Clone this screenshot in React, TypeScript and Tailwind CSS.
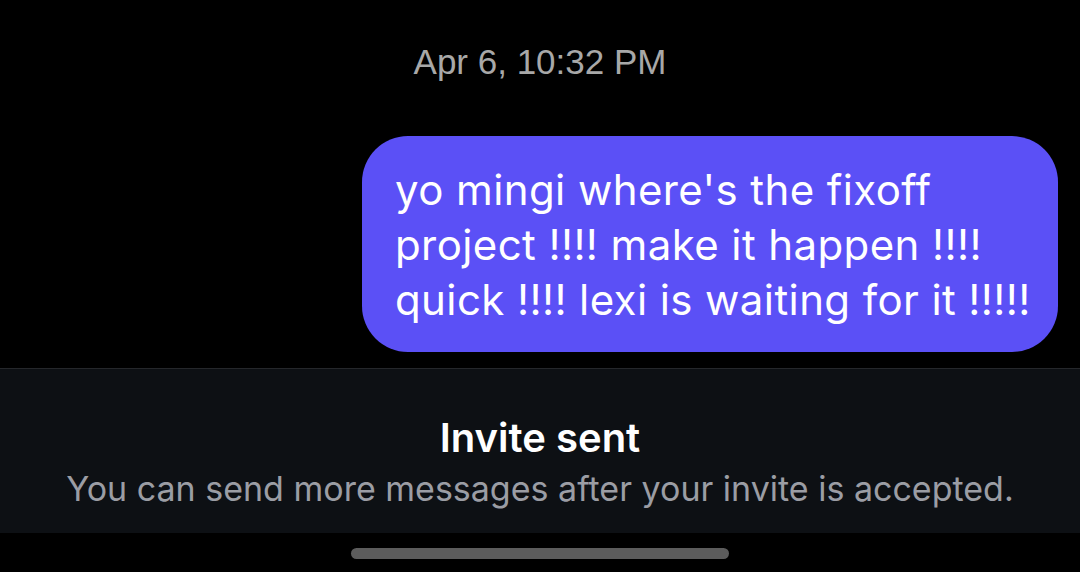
export default function App() {
  return (
    <div className="w-[1080px] h-[572px] bg-black flex flex-col overflow-hidden">
      <div className="flex flex-col flex-1">
        <div
          className="pt-[40px] text-center text-[35px] leading-[44px] text-[#a8a8a8]"
          style={{ fontFamily: '"Liberation Sans", Arial, sans-serif' }}
        >
          Apr 6, 10:32 PM
        </div>
        <div className="flex justify-end pr-[22px] pt-[52px]">
          <div
            className="w-[696px] h-[216px] bg-[#5b50f6] rounded-[46px] pl-[33px] pt-[26px] text-white text-[42px] leading-[55px] tracking-[0.4px]"
            style={{ fontFamily: 'Inter, "Noto Sans", sans-serif' }}
          >
            <div>yo mingi where's the fixoff</div>
            <div>project !!!! make it happen !!!!</div>
            <div>quick !!!! lexi is waiting for it !!!!!</div>
          </div>
        </div>
      </div>
      <div
        className="h-[165px] bg-[#0d1014] border-t border-[#25272b] flex flex-col items-center pt-[45px]"
        style={{ fontFamily: 'Inter, "Noto Sans", sans-serif' }}
      >
        <div className="text-white text-[40px] leading-[48px] font-semibold">Invite sent</div>
        <div className="text-[#9b9da4] text-[34px] leading-[42px] mt-[6px]">
          You can send more messages after your invite is accepted.
        </div>
      </div>
      <div className="h-[39px] flex justify-center pt-[15px]">
        <div className="w-[378px] h-[11px] rounded-full bg-[#5c5c5c]" />
      </div>
    </div>
  );
}
